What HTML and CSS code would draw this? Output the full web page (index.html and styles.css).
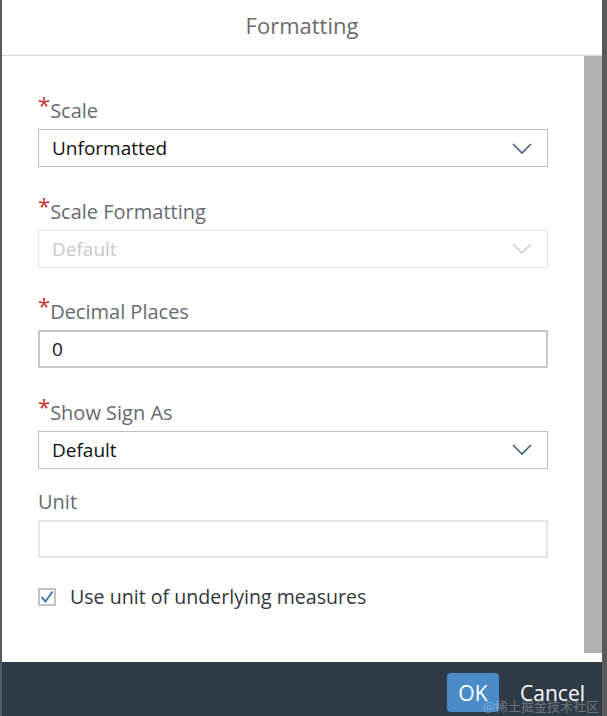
FILE: index.html
```html
<!DOCTYPE html>
<html lang="en">
<head>
<meta charset="utf-8">
<title>Formatting</title>
<link rel="stylesheet" href="styles.css">
</head>
<body>
<div class="dialog">
  <header class="dialog-header">
    <h1 class="dialog-title">Formatting</h1>
  </header>
  <div class="dialog-body">
    <form class="form">
      <div class="field">
        <label class="field-label"><span class="req">*</span>Scale</label>
        <div class="select">
          <span class="select-value">Unformatted</span>
          <svg class="chevron" width="20" height="11" viewBox="0 0 20 11"><path d="M1 1 L10 10 L19 1" fill="none" stroke="currentColor" stroke-width="1.6"/></svg>
        </div>
      </div>
      <div class="field">
        <label class="field-label"><span class="req">*</span>Scale Formatting</label>
        <div class="select select-disabled">
          <span class="select-value">Default</span>
          <svg class="chevron" width="20" height="11" viewBox="0 0 20 11"><path d="M1 1 L10 10 L19 1" fill="none" stroke="currentColor" stroke-width="1.6"/></svg>
        </div>
      </div>
      <div class="field">
        <label class="field-label"><span class="req">*</span>Decimal Places</label>
        <div class="input input-strong"><span class="select-value">0</span></div>
      </div>
      <div class="field">
        <label class="field-label"><span class="req">*</span>Show Sign As</label>
        <div class="select">
          <span class="select-value">Default</span>
          <svg class="chevron" width="20" height="11" viewBox="0 0 20 11"><path d="M1 1 L10 10 L19 1" fill="none" stroke="currentColor" stroke-width="1.6"/></svg>
        </div>
      </div>
      <div class="field">
        <label class="field-label">Unit</label>
        <div class="input input-light"></div>
      </div>
      <div class="check-row">
        <span class="checkbox">
          <svg width="14" height="14" viewBox="0 0 14 14"><path d="M1.5 7 L5.5 11.5 L12.5 1.5" fill="none" stroke="#3f7bb0" stroke-width="1.9"/></svg>
        </span>
        <span class="check-text">Use unit of underlying measures</span>
      </div>
    </form>
    <div class="scrollbar"><div class="thumb"></div></div>
  </div>
  <footer class="dialog-footer">
    <button class="btn btn-primary" type="button">OK</button>
    <button class="btn btn-plain" type="button">Cancel</button>
    <span class="watermark">@稀土掘金技术社区</span>
  </footer>
</div>
</body>
</html>
```
FILE: styles.css
```css
html, body {
  margin: 0;
  padding: 0;
}
body {
  background: #5a5a5a;
  font-family: "Open Sans", "Noto Sans", "Noto Sans CJK SC", sans-serif;
  width: 607px;
  height: 716px;
  overflow: hidden;
}
.dialog {
  margin: 0 5px 0 2px;
  height: 716px;
  background: #ffffff;
  display: flex;
  flex-direction: column;
}
.dialog-header {
  height: 55px;
  border-bottom: 1px solid #d9d9d9;
  display: flex;
  align-items: center;
  justify-content: center;
}
.dialog-title {
  margin: 0 0 6px 0;
  font-size: 22px;
  font-weight: 400;
  color: #6a6a6a;
  line-height: 30px;
}
.dialog-body {
  flex: 1;
  display: flex;
  min-height: 0;
}
.form {
  flex: 1;
  padding: 32px 36px 0 36px;
  display: flex;
  flex-direction: column;
  gap: 21.6px;
}
.field {
  display: flex;
  flex-direction: column;
}
.field-label {
  font-size: 20px;
  line-height: 24px;
  color: #666a6e;
  margin-bottom: 6px;
}
.req {
  color: #c9302c;
  font-size: 22px;
  vertical-align: 5px;
  line-height: 32px;
}
.select, .input {
  box-sizing: border-box;
  height: 38px;
  border: 1px solid #bfbfbf;
  display: flex;
  align-items: center;
  padding: 0 15px 0 13px;
  font-size: 19px;
  color: #111;
}
.select-value {
  flex: 1;
}
.chevron {
  color: #3e5f80;
}
.select-disabled {
  border-color: #e3e3e3;
  color: #c8c8c8;
}
.select-disabled .chevron {
  color: #d0d0d0;
}
.input-strong {
  border: 2px solid #c8c8c8;
  padding-left: 12px;
}
.input-light {
  border: 2px solid #e6e6e6;
}
.check-row {
  display: flex;
  align-items: center;
  gap: 14px;
  height: 24px;
  margin-top: 5px;
}
.checkbox {
  box-sizing: border-box;
  width: 18px;
  height: 18px;
  border: 2px solid #c4c4c4;
  background: #fff;
  display: flex;
  align-items: center;
  justify-content: center;
}
.checkbox svg {
  display: block;
}
.check-text {
  font-size: 19.6px;
  color: #32363a;
}
.scrollbar {
  width: 18px;
  display: flex;
  flex-direction: column;
}
.thumb {
  height: 597px;
  background: #b3b3b3;
}
.dialog-footer {
  position: relative;
  height: 54px;
  background: #2f3c48;
  display: flex;
  justify-content: flex-end;
  align-items: flex-start;
  gap: 21px;
  padding: 11px 17px 0 0;
  box-sizing: border-box;
}
.btn {
  font-family: "Open Sans", "Noto Sans", sans-serif;
  font-size: 21px;
  height: 39px;
  border: none;
  color: #ffffff;
  padding: 0;
  cursor: pointer;
}
.btn-primary {
  background: #4a8bc8;
  border-radius: 4px;
  padding: 0 11.5px;
}
.btn-plain {
  background: transparent;
}
.watermark {
  position: absolute;
  right: 3px;
  bottom: 2px;
  font-size: 13px;
  line-height: 16px;
  color: rgba(255, 255, 255, 0.3);
  font-family: "Noto Sans CJK SC", sans-serif;
}
```
